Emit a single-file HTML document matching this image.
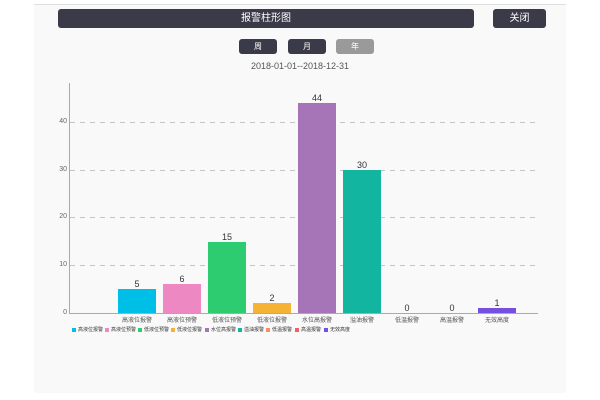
<!DOCTYPE html>
<html><head><meta charset="utf-8"><style>
*{margin:0;padding:0;box-sizing:border-box}
body{width:600px;height:400px;background:#fff;position:relative;overflow:hidden;font-family:"Liberation Sans","Noto Sans CJK SC",sans-serif}
.panel{position:absolute;left:34px;top:4px;width:532px;height:389px;background:#f9f9f9;border-top:1px solid #ddd}
.btn{position:absolute;background:#3a3a48;color:#fff;border-radius:3px;text-align:center;font-size:10px}
.a{position:absolute}
.bar{position:absolute;width:38px}
.v{position:absolute;width:38px;text-align:center;font-size:9px;color:#333}
.x{position:absolute;width:44px;text-align:center;font-size:6px;color:#555;top:315px}
.yl{position:absolute;left:52px;width:15px;text-align:right;font-size:7px;color:#666}
.g{position:absolute;left:70px;width:468px;height:1px;background:repeating-linear-gradient(90deg,#c4c4c4 0 5px,transparent 5px 10px)}
.lg{position:absolute;top:326px;font-size:5px;color:#333;white-space:nowrap}
.lg i{display:inline-block;width:4px;height:4px;margin-right:2px;vertical-align:middle}
</style></head><body>
<div class="panel"></div>
<div class="btn" style="left:58px;top:9px;width:416px;height:19px;line-height:19px">报警柱形图</div>
<div class="btn" style="left:493px;top:9px;width:53px;height:19px;line-height:19px">关闭</div>
<div class="btn" style="left:239px;top:39px;width:38px;height:15px;line-height:15px;font-size:8px">周</div>
<div class="btn" style="left:288px;top:39px;width:38px;height:15px;line-height:15px;font-size:8px">月</div>
<div class="btn" style="left:336px;top:39px;width:38px;height:15px;line-height:15px;font-size:8px;background:#9a9a9a">年</div>
<div class="a" style="left:200px;top:61px;width:200px;text-align:center;font-size:9px;color:#555">2018-01-01--2018-12-31</div>
<div class="a" style="left:69px;top:83px;width:1px;height:231px;background:#aaa"></div>
<div class="a" style="left:69px;top:313px;width:469px;height:1px;background:#aaa"></div>
<div class="g" style="top:122px"></div><div class="g" style="top:170px"></div><div class="g" style="top:217px"></div><div class="g" style="top:265px"></div>
<div class="yl" style="top:118px">40</div><div class="yl" style="top:166px">30</div><div class="yl" style="top:213px">20</div><div class="yl" style="top:261px">10</div><div class="yl" style="top:309px">0</div>
<div class="bar" style="left:118px;top:289px;height:24px;background:#00bfe6"></div><div class="v" style="left:118px;top:279px">5</div>
<div class="bar" style="left:163px;top:284px;height:29px;background:#ee88c2"></div><div class="v" style="left:163px;top:274px">6</div>
<div class="bar" style="left:208px;top:242px;height:71px;background:#2ecc71"></div><div class="v" style="left:208px;top:232px">15</div>
<div class="bar" style="left:253px;top:303px;height:10px;background:#f5b335"></div><div class="v" style="left:253px;top:293px">2</div>
<div class="bar" style="left:298px;top:103px;height:210px;background:#a675b8"></div><div class="v" style="left:298px;top:93px">44</div>
<div class="bar" style="left:343px;top:170px;height:143px;background:#12b5a0"></div><div class="v" style="left:343px;top:160px">30</div>
<div class="v" style="left:388px;top:303px">0</div>
<div class="v" style="left:433px;top:303px">0</div>
<div class="bar" style="left:478px;top:308px;height:5px;background:#7550e0"></div><div class="v" style="left:478px;top:298px">1</div>
<div class="x" style="left:115px">高液位报警</div><div class="x" style="left:160px">高液位预警</div><div class="x" style="left:205px">低液位预警</div><div class="x" style="left:250px">低液位报警</div><div class="x" style="left:295px">水位高报警</div><div class="x" style="left:340px">溢油报警</div><div class="x" style="left:385px">低温报警</div><div class="x" style="left:430px">高温报警</div><div class="x" style="left:475px">无效高度</div>
<div class="lg" style="left:72px"><i style="background:#00bfe6"></i>高液位报警</div>
<div class="lg" style="left:105px"><i style="background:#ee88c2"></i>高液位预警</div>
<div class="lg" style="left:138px"><i style="background:#2ecc71"></i>低液位预警</div>
<div class="lg" style="left:171px"><i style="background:#f5b335"></i>低液位报警</div>
<div class="lg" style="left:205px"><i style="background:#a675b8"></i>水位高报警</div>
<div class="lg" style="left:238px"><i style="background:#12b5a0"></i>溢油报警</div>
<div class="lg" style="left:266px"><i style="background:#f79060"></i>低温报警</div>
<div class="lg" style="left:295px"><i style="background:#f06060"></i>高温报警</div>
<div class="lg" style="left:324px"><i style="background:#7550e0"></i>无效高度</div>
</body></html>
